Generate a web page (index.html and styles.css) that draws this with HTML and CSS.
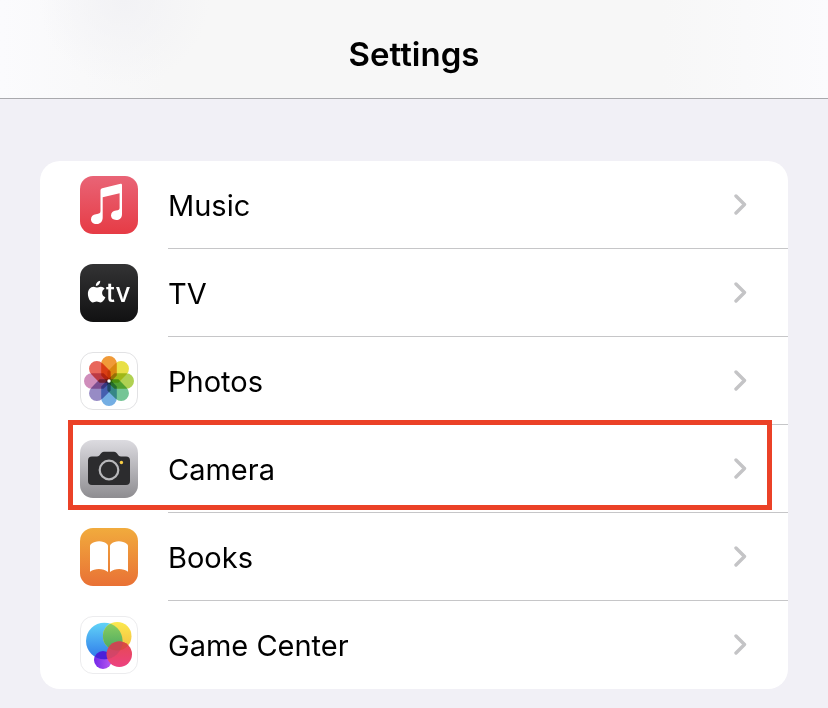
FILE: index.html
```html
<!DOCTYPE html>
<html lang="en">
<head>
<meta charset="utf-8">
<meta name="viewport" content="width=device-width, initial-scale=1">
<title>Settings</title>
<link rel="stylesheet" href="styles.css">
</head>
<body>
<header class="bar"><h1 class="bar-title">Settings</h1></header>
<main class="content">
  <ul class="list">
    <li class="row">
      <svg class="icon" viewBox="0 0 58 58" aria-hidden="true">
        <defs><linearGradient id="music" x1="0" y1="0" x2="0" y2="1"><stop offset="0" stop-color="#e96476"/><stop offset="1" stop-color="#e63b45"/></linearGradient></defs>
        <rect width="58" height="58" rx="13" fill="url(#music)"/>
        <path fill="#fff" d="M22.200 12.200 40.600 7.800Q42 7.500 42 8.900V38.200C42 42 39.600 44 36.200 44C33 44 31 42.200 31 39.600C31 36.800 33 35 36 34.600C38.600 34.200 39.600 33.800 39.600 32V17.300L22.700 21.200V41.400C22.700 45.600 20 48 16.400 48C13.200 48 11 46 11 43.200C11 40.400 13 38.600 16 38.200C19.200 37.800 20.500 37.400 20.500 35V14.200Q20.500 12.600 22.200 12.200Z"/>
      </svg>
      <a class="link" href="#music-settings"><span class="label">Music</span><svg class="chevron" viewBox="0 0 14 22" aria-hidden="true"><path d="M2 2 10.500 10.500 2 19"/></svg></a>
    </li>
    <li class="row">
      <svg class="icon" viewBox="0 0 58 58" aria-hidden="true">
        <defs><linearGradient id="tv" x1="0" y1="0" x2="0" y2="1"><stop offset="0" stop-color="#333334"/><stop offset="1" stop-color="#111112"/></linearGradient></defs>
        <rect width="58" height="58" rx="13" fill="url(#tv)"/>
        <path fill="#fff" d="M20.200 16.800C20.400 19.600 18.200 22 15.900 21.900C15.600 19.300 17.900 17 20.200 16.800ZM24.600 24.700C20.900 27 21.500 31.700 25.400 33.300C24.300 36.100 22.500 38.400 20.600 38.400C19.100 38.400 18.500 37.600 16.700 37.600C14.900 37.600 14.200 38.400 12.800 38.400C10.300 38.400 7.900 34 7.900 29.800C7.900 25.600 10.500 22.700 13.500 22.700C15 22.700 16.200 23.600 17 23.600C17.900 23.600 19.200 22.600 21 22.700C22.500 22.700 23.800 23.500 24.600 24.700Z"/>
        <text class="tv-text" x="26" y="38">tv</text>
      </svg>
      <a class="link" href="#tv-settings"><span class="label">TV</span><svg class="chevron" viewBox="0 0 14 22" aria-hidden="true"><path d="M2 2 10.500 10.500 2 19"/></svg></a>
    </li>
    <li class="row">
      <svg class="icon" viewBox="0 0 58 58" aria-hidden="true">
        <defs><path id="petal" d="M21.200 11.800A7.800 7.800 0 0 1 36.800 11.800V23.500L31.500 29H26.500L21.200 23.500Z"/></defs>
        <rect x=".5" y=".5" width="57" height="57" rx="12.500" fill="#fff" stroke="#e2e2e4"/>
        <g class="blend">
          <use href="#petal" fill="#f09a38"/>
          <use href="#petal" fill="#e8e047" transform="rotate(45 29 29)"/>
          <use href="#petal" fill="#b0d152" transform="rotate(90 29 29)"/>
          <use href="#petal" fill="#75c596" transform="rotate(135 29 29)"/>
          <use href="#petal" fill="#74aee3" transform="rotate(180 29 29)"/>
          <use href="#petal" fill="#978bc5" transform="rotate(225 29 29)"/>
          <use href="#petal" fill="#cf8dbb" transform="rotate(270 29 29)"/>
          <use href="#petal" fill="#e8665b" transform="rotate(315 29 29)"/>
        </g>
        <circle cx="29" cy="29" r="1.700" fill="#fff"/>
      </svg>
      <a class="link" href="#photos-settings"><span class="label">Photos</span><svg class="chevron" viewBox="0 0 14 22" aria-hidden="true"><path d="M2 2 10.500 10.500 2 19"/></svg></a>
    </li>
    <li class="row marked">
      <svg class="icon" viewBox="0 0 58 58" aria-hidden="true">
        <defs><linearGradient id="camera" x1="0" y1="0" x2="0" y2="1"><stop offset="0" stop-color="#dcdbe0"/><stop offset="1" stop-color="#8e8d91"/></linearGradient></defs>
        <rect width="58" height="58" rx="13" fill="url(#camera)"/>
        <path fill="#2c2c2e" d="M12 16.500H17C20.500 16.500 20.500 11.800 24 11.800H34C37.500 11.800 37.500 16.500 41 16.500H46Q50 16.500 50 20.500V41Q50 45 46 45H12Q8 45 8 41V20.500Q8 16.500 12 16.500Z"/>
        <circle cx="29" cy="30" r="9.300" fill="none" stroke="#b8b8bb" stroke-width="2.200"/>
        <circle cx="41.400" cy="22.500" r="1.700" fill="#f8ce46"/>
      </svg>
      <a class="link" href="#camera-settings"><span class="label">Camera</span><svg class="chevron" viewBox="0 0 14 22" aria-hidden="true"><path d="M2 2 10.500 10.500 2 19"/></svg></a>
    </li>
    <li class="row">
      <svg class="icon" viewBox="0 0 58 58" aria-hidden="true">
        <defs><linearGradient id="books" x1="0" y1="0" x2="0" y2="1"><stop offset="0" stop-color="#f1ab3d"/><stop offset="1" stop-color="#e97135"/></linearGradient></defs>
        <rect width="58" height="58" rx="13" fill="url(#books)"/>
        <path fill="#fff" d="M10 18Q10 16.800 11 16C15.500 12.300 23 12.300 27 16Q28 16.800 28 18V44C23.500 40.300 15 40 10 43.800ZM48 18Q48 16.800 47 16C42.500 12.300 35 12.300 31 16Q30 16.800 30 18V44C34.500 40.300 43 40 48 43.800Z"/>
      </svg>
      <a class="link" href="#books-settings"><span class="label">Books</span><svg class="chevron" viewBox="0 0 14 22" aria-hidden="true"><path d="M2 2 10.500 10.500 2 19"/></svg></a>
    </li>
    <li class="row">
      <svg class="icon" viewBox="0 0 58 58" aria-hidden="true">
        <defs>
          <linearGradient id="blue" x1="0" y1="0" x2="0" y2="1"><stop offset="0" stop-color="#61d3f7"/><stop offset="1" stop-color="#2e78ea"/></linearGradient>
          <linearGradient id="yellow" x1="0" y1="0" x2="0" y2="1"><stop offset="0" stop-color="#fbe94f"/><stop offset="1" stop-color="#f3bb40"/></linearGradient>
          <linearGradient id="green" x1="0" y1="0" x2="0" y2="1"><stop offset="0" stop-color="#8fd060"/><stop offset="1" stop-color="#48a761"/></linearGradient>
          <linearGradient id="pink" x1="0" y1="0" x2="0" y2="1"><stop offset="0" stop-color="#e64a50"/><stop offset="1" stop-color="#ec4180"/></linearGradient>
          <linearGradient id="purple" x1="0" y1="0" x2="1" y2="0"><stop offset="0" stop-color="#7227e8"/><stop offset="1" stop-color="#bd59f0"/></linearGradient>
          <clipPath id="blue-area"><circle cx="24.300" cy="25" r="18.300"/></clipPath>
          <clipPath id="yellow-area"><circle cx="37.200" cy="20.200" r="14.300"/></clipPath>
        </defs>
        <rect x=".5" y=".5" width="57" height="57" rx="12.500" fill="#fff" stroke="#ececee"/>
        <circle cx="23" cy="44" r="9" fill="url(#purple)"/>
        <circle cx="24.300" cy="25" r="18.300" fill="url(#blue)"/>
        <circle cx="23" cy="44" r="9" fill="#4a20d8" clip-path="url(#blue-area)"/>
        <circle cx="37.200" cy="20.200" r="14.300" fill="url(#yellow)"/>
        <circle cx="37.200" cy="20.200" r="14.300" fill="url(#green)" clip-path="url(#blue-area)"/>
        <circle cx="39.300" cy="38.300" r="12.700" fill="url(#pink)"/>
        <circle cx="39.300" cy="38.300" r="12.700" fill="#d94b42" clip-path="url(#yellow-area)"/>
        <circle cx="39.300" cy="38.300" r="12.700" fill="#b84468" opacity=".45" clip-path="url(#blue-area)"/>
      </svg>
      <a class="link" href="#game-center-settings"><span class="label">Game Center</span><svg class="chevron" viewBox="0 0 14 22" aria-hidden="true"><path d="M2 2 10.500 10.500 2 19"/></svg></a>
    </li>
  </ul>
</main>
</body>
</html>
```
FILE: styles.css
```css
* {
  box-sizing: border-box;
}

body {
  margin: 0;
  background: #f1f0f6;
  color: #000;
  font-family: Inter, "Liberation Sans", sans-serif;
}

.bar {
  padding: 34px 16px 24px;
  border-bottom: 1px solid #a9a9ad;
  background:
    radial-gradient(circle at 15% 0, #f2f2f5, transparent 12%),
    linear-gradient(90deg, #fbfbfd, #f7f7f7 20%, #f7f7f7 80%, #fbfbfd);
}

.bar-title {
  margin: 0;
  font-size: 33px;
  line-height: 40px;
  font-weight: 600;
  text-align: center;
}

.content {
  padding: 62px 40px 19px;
}

.list {
  margin: 0;
  padding: 0;
  border-radius: 20px;
  background: #fff;
  list-style: none;
}

.row {
  position: relative;
  display: flex;
  align-items: center;
  gap: 30px;
  height: 88px;
  padding-left: 40px;
}

.icon {
  flex: none;
  width: 58px;
  height: 58px;
}

.tv-text {
  fill: #fff;
  font-size: 26px;
  font-weight: 500;
}

.blend {
  isolation: isolate;
}

.blend use {
  mix-blend-mode: multiply;
}

.link {
  flex: 1;
  display: flex;
  align-items: center;
  justify-content: space-between;
  height: 88px;
  padding-right: 40px;
  border-bottom: 1px solid #c6c6c8;
  color: inherit;
  font-size: 29px;
  line-height: 40px;
  text-decoration: none;
}

.label {
  padding-top: 2px;
}

.row:last-child .link {
  border-bottom-color: transparent;
}

.chevron {
  width: 14px;
  height: 22px;
  fill: none;
  stroke: #c4c4c6;
  stroke-width: 3.4;
  stroke-linecap: round;
  stroke-linejoin: round;
}

.marked {
  z-index: 1;
}

.marked::after {
  content: "";
  position: absolute;
  inset: -5px 16px 3px 28px;
  border: 5px solid #eb4127;
  pointer-events: none;
}
```
